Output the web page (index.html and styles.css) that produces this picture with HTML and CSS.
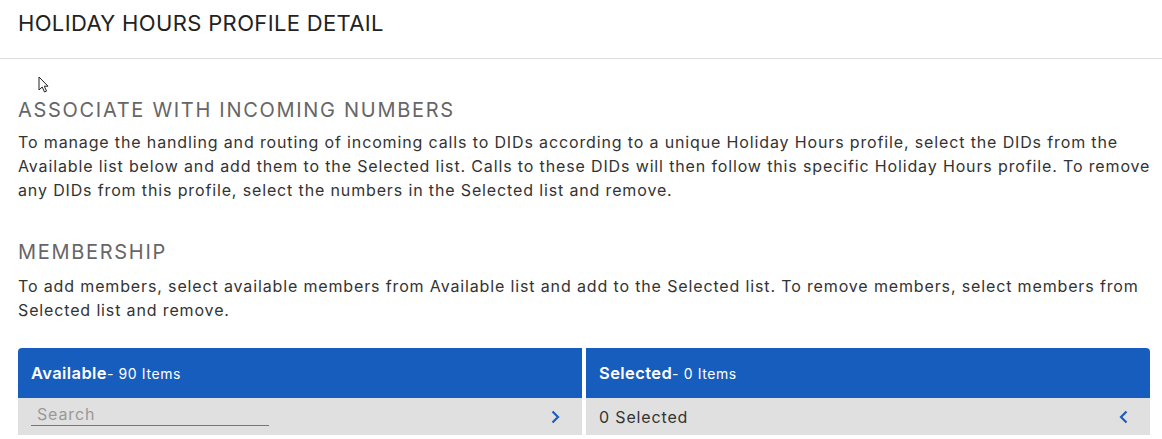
FILE: index.html
```html
<!DOCTYPE html>
<html lang="en">
<head>
  <meta charset="UTF-8">
  <title>Holiday Hours Profile Detail</title>
  <link rel="stylesheet" href="styles.css">
</head>
<body>
  <!-- Page header -->
  <header class="page-header">
    <h1>HOLIDAY HOURS PROFILE DETAIL</h1>
  </header>

  <main class="content">
    <section class="section">
      <h2>ASSOCIATE WITH INCOMING NUMBERS</h2>
      <p>To manage the handling and routing of incoming calls to DIDs according to a unique Holiday Hours profile, select the DIDs from the Available list below and add them to the Selected list. Calls to these DIDs will then follow this specific Holiday Hours profile. To remove any DIDs from this profile, select the numbers in the Selected list and remove.</p>
    </section>

    <section class="section">
      <h2>MEMBERSHIP</h2>
      <p>To add members, select available members from Available list and add to the Selected list. To remove members, select members from Selected list and remove.</p>
    </section>

    <!-- Dual list picker -->
    <div class="picker">
      <div class="picker-col">
        <div class="picker-head"><strong>Available</strong>- 90 Items</div>
        <div class="picker-bar">
          <input class="picker-search" type="text" placeholder="Search">
          <button class="picker-arrow" type="button" title="Add">
            <svg viewBox="0 0 9 14"><path d="M1.5 1.5L7 7l-5.5 5.5" fill="none" stroke="#1a5fbe" stroke-width="2.2"/></svg>
          </button>
        </div>
      </div>
      <div class="picker-col">
        <div class="picker-head"><strong>Selected</strong>- 0 Items</div>
        <div class="picker-bar">
          <span class="picker-count">0 Selected</span>
          <button class="picker-arrow" type="button" title="Remove">
            <svg viewBox="0 0 9 14"><path d="M7.5 1.5L2 7l5.5 5.5" fill="none" stroke="#1a5fbe" stroke-width="2.2"/></svg>
          </button>
        </div>
      </div>
    </div>
  </main>

  <!-- mouse pointer seen in the capture -->
  <svg class="cursor" viewBox="0 0 12 18"><path d="M1 1v13l3.2-3 2.3 5 2-.9-2.2-4.9H10z" fill="#fff" stroke="#222" stroke-width="1"/></svg>
</body>
</html>
```

FILE: styles.css
```css
html, body {
  margin: 0;
  padding: 0;
}
body {
  background: #fff;
  font-family: Inter, 'Noto Sans', Arial, sans-serif;
  color: #333;
  position: relative;
}
.page-header {
  height: 59px;
  border-bottom: 1px solid #dcdcdc;
  padding: 9px 18px 0 18px;
  box-sizing: border-box;
}
.page-header h1 {
  margin: 0;
  font-size: 22px;
  line-height: 28px;
  font-weight: 400;
  color: #222;
  letter-spacing: .35px;
}
.content {
  padding: 37px 12px 0 18px;
}
.section {
  margin-bottom: 36px;
  margin-right: -4px;
}
.section h2 {
  margin: 0 0 6px 0;
  font-size: 20px;
  font-weight: 400;
  color: #666;
  line-height: 28px;
  letter-spacing: 1.7px;
}
.section p {
  margin: 0;
  font-size: 16px;
  line-height: 24px;
  color: #333;
  letter-spacing: .86px;
}
.section + .section {
  margin-bottom: 26px;
}
.section + .section h2 {
  margin-bottom: 8px;
}
.picker {
  display: flex;
  gap: 4px;
}
.picker-col {
  flex: 1;
}
.picker-head {
  background: #175dbe;
  color: #fff;
  height: 50px;
  display: flex;
  align-items: center;
  padding: 0 13px;
  font-size: 14px;
  letter-spacing: .6px;
}
.picker-col:first-child .picker-head { border-top-left-radius: 4px; }
.picker-col:last-child .picker-head { border-top-right-radius: 4px; }
.picker-head strong {
  font-size: 16.5px;
  font-weight: 600;
  letter-spacing: .4px;
}
.picker-bar {
  background: #e0e0e0;
  height: 37px;
  display: flex;
  align-items: center;
  padding: 0 22px 0 13px;
}
.picker-search {
  width: 238px;
  box-sizing: border-box;
  border: none;
  border-bottom: 1px solid #777;
  background: transparent;
  font-family: inherit;
  font-size: 16px;
  letter-spacing: .85px;
  color: #333;
  padding: 2px 6px 1px 6px;
  outline: none;
  margin-bottom: 5px;
}
.picker-search::placeholder {
  color: #999;
  opacity: 1;
}
.picker-count {
  font-size: 16px;
  letter-spacing: .85px;
  color: #333;
}
.picker-arrow {
  margin-left: auto;
  background: none;
  border: none;
  padding: 0;
  width: 9px;
  height: 14px;
  cursor: pointer;
  display: flex;
}
.picker-arrow svg {
  width: 9px;
  height: 14px;
}
.cursor {
  position: absolute;
  left: 38px;
  top: 76px;
  width: 12px;
  height: 18px;
}
```
